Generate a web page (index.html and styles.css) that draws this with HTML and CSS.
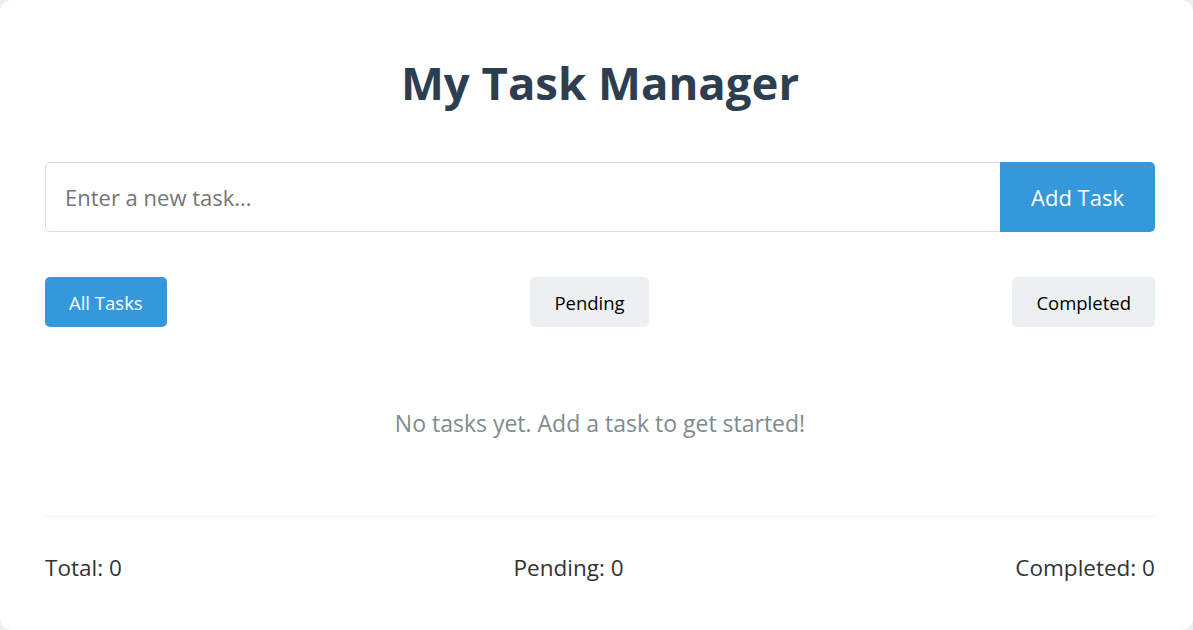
FILE: index.html
```html
<!DOCTYPE html>
<html lang="en">
<head>
<meta charset="utf-8">
<title>My Task Manager</title>
<link rel="stylesheet" href="styles.css">
</head>
<body>
<div class="card">
  <h1 class="title">My Task Manager</h1>
  <div class="add-row">
    <input class="task-input" type="text" placeholder="Enter a new task...">
    <button class="add-btn">Add Task</button>
  </div>
  <div class="filters">
    <button class="filter active">All Tasks</button>
    <button class="filter">Pending</button>
    <button class="filter">Completed</button>
  </div>
  <div class="empty">No tasks yet. Add a task to get started!</div>
  <div class="stats">
    <span>Total: 0</span>
    <span>Pending: 0</span>
    <span>Completed: 0</span>
  </div>
</div>
</body>
</html>
```

FILE: styles.css
```css
html, body {
  margin: 0;
  padding: 0;
}
body {
  background: #eeeeee;
  font-family: "Open Sans", "Noto Sans", sans-serif;
}
.card {
  box-sizing: border-box;
  width: 1193px;
  height: 630px;
  background: #ffffff;
  border-radius: 12px;
  padding: 0 38px 0 45px;
  display: flex;
  flex-direction: column;
}
.title {
  margin: 52px 0 0;
  height: 60px;
  line-height: 60px;
  text-align: center;
  font-size: 45.5px;
  font-weight: 700;
  color: #2c3e50;
}
.add-row {
  display: flex;
  margin-top: 50px;
  height: 70px;
}
.task-input {
  flex: 1;
  box-sizing: border-box;
  height: 70px;
  border: 1px solid #dddddd;
  border-right: none;
  border-radius: 5px 0 0 5px;
  padding: 0 19px;
  font-family: inherit;
  font-size: 22px;
  color: #333;
  outline: none;
}
.task-input::placeholder {
  color: #757575;
}
.add-btn {
  width: 155px;
  height: 70px;
  border: none;
  border-radius: 0 5px 5px 0;
  background: #3498db;
  color: #ffffff;
  font-family: inherit;
  font-size: 22px;
  padding: 0;
}
.filters {
  display: flex;
  justify-content: space-between;
  margin-top: 45px;
}
.filter {
  height: 50px;
  padding: 0 24px;
  border: none;
  border-radius: 5px;
  background: #ecf0f1;
  color: #000;
  font-family: inherit;
  font-size: 18.5px;
}
.filter.active {
  background: #3498db;
  color: #fff;
}
.empty {
  margin-top: 80px;
  height: 32px;
  line-height: 32px;
  text-align: center;
  font-size: 23px;
  color: #7f8c8d;
}
.stats {
  margin-top: 77px;
  border-top: 1px solid #eeeeee;
  padding-top: 35px;
  display: flex;
  justify-content: space-between;
  font-size: 22.5px;
  line-height: 32px;
  color: #333333;
}
```
